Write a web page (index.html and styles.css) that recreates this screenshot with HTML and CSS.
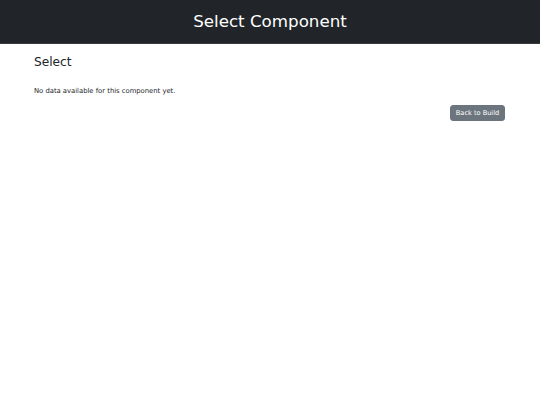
FILE: index.html
```html
<!DOCTYPE html>
<html>
<head>
<meta charset="utf-8">
<link rel="stylesheet" href="styles.css">
</head>
<body>
<header class="topbar">
  <h1 class="topbar-title">Select Component</h1>
</header>
<main class="content">
  <h2 class="section-title">Select</h2>
  <p class="empty-note">No data available for this component yet.</p>
  <div class="actions">
    <button class="btn-back" type="button">Back to Build</button>
  </div>
</main>
</body>
</html>
```
FILE: styles.css
```css
* { box-sizing: border-box; }
html, body {
  margin: 0;
  padding: 0;
  background: #ffffff;
  font-family: "DejaVu Sans", Verdana, sans-serif;
  color: #212529;
}
.topbar {
  background: #212529;
  height: 44px;
  display: flex;
  align-items: center;
  justify-content: center;
  border-bottom: 1px solid #3a3d40;
}
.topbar-title {
  margin: 0;
  color: #ffffff;
  font-size: 16.7px;
  font-weight: normal;
  line-height: 1;
}
.content {
  padding: 10px 35px 0 34px;
}
.section-title {
  margin: 0;
  font-size: 12.2px;
  font-weight: normal;
  line-height: 16px;
}
.empty-note {
  margin: 17px 0 0 0;
  font-size: 6.8px;
  line-height: 9px;
  color: #212529;
}
.actions {
  display: flex;
  justify-content: flex-end;
  margin-top: 9px;
}
.btn-back {
  background: #6c757d;
  color: #ffffff;
  border: 1px solid #6c757d;
  border-radius: 3px;
  font-family: "DejaVu Sans", Verdana, sans-serif;
  font-size: 6.6px;
  height: 16px;
  width: 55px;
  padding: 0;
  line-height: 1;
}
```
